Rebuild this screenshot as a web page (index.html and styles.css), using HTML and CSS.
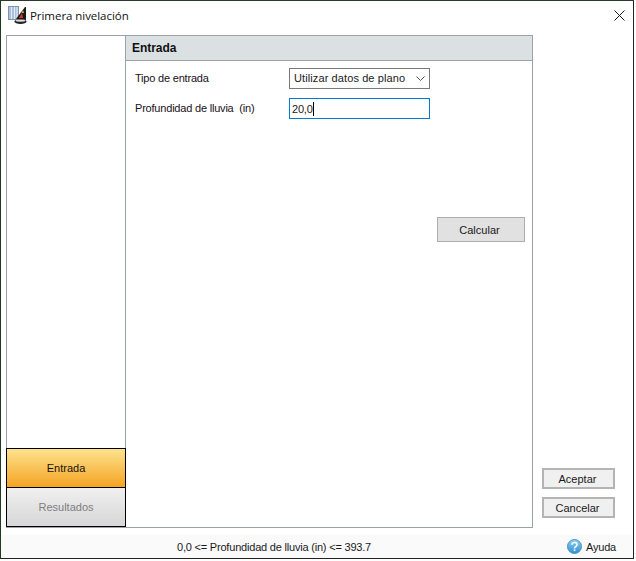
FILE: index.html
```html
<!DOCTYPE html>
<html lang="es">
<head>
<meta charset="utf-8">
<title>Primera nivelación</title>
<link rel="stylesheet" href="styles.css">
</head>
<body>
<div class="window">
  <div class="titlebar">
    <svg class="app-icon" width="22" height="20" viewBox="0 0 22 20">
      <rect x="0.5" y="1.5" width="10" height="13" fill="#a9bfdc" stroke="#7f93ad"/>
      <path d="M3.5 2v12M6.5 2v12M9 2v12" stroke="#e6edf6"/>
      <path d="M8 14L17 2h1v13z" fill="#1a1a1a"/>
      <path d="M11 13l3-5 1 5z" fill="#d8342c"/>
      <path d="M13.5 8l1.5-3 1 3z" fill="#e9b03a"/>
      <ellipse cx="12.5" cy="16.5" rx="6" ry="2.5" fill="#222"/>
      <ellipse cx="12.5" cy="15.6" rx="5" ry="1.2" fill="#ddd"/>
    </svg>
    <span class="title">Primera nivelación</span>
    <svg class="close" width="11" height="11" viewBox="0 0 11 11"><path d="M0.5 0.5l10 10M10.5 0.5l-10 10" stroke="#1a1a1a" fill="none"/></svg>
  </div>
  <div class="main">
    <div class="panel">
      <div class="side">
        <div class="side-space"></div>
        <div class="tab tab-active">Entrada</div>
        <div class="tab tab-off">Resultados</div>
      </div>
      <div class="content">
        <div class="head">Entrada</div>
        <div class="form">
          <div class="row row-first">
            <span class="label">Tipo de entrada</span>
            <div class="select">
              <span class="select-text">Utilizar datos de plano</span>
              <svg width="9" height="5" viewBox="0 0 9 5"><path d="M0.5 0.5l4 4 4-4" stroke="#555" fill="none"/></svg>
            </div>
          </div>
          <div class="row row-second">
            <span class="label">Profundidad de lluvia  (in)</span>
            <div class="input"><span>20,0</span><i class="caret"></i></div>
          </div>
          <div class="calc-row"><div class="btn-calc">Calcular</div></div>
        </div>
      </div>
    </div>
    <div class="actions">
      <div class="btn">Aceptar</div>
      <div class="btn">Cancelar</div>
    </div>
  </div>
  <div class="status">
    <span class="hint">0,0 &lt;= Profundidad de lluvia (in) &lt;= 393.7</span>
    <div class="help">
      <svg width="15" height="15" viewBox="0 0 15 15">
        <defs><linearGradient id="hg" x1="0" y1="0" x2="0" y2="1"><stop offset="0" stop-color="#8fd0f2"/><stop offset="1" stop-color="#2f8fd0"/></linearGradient></defs>
        <circle cx="7.5" cy="7.5" r="7" fill="url(#hg)" stroke="#4a94c4"/>
        <path d="M5 5.8c0-3 5-3 5 0 0 1.8-2.5 1.8-2.5 3.6" fill="none" stroke="#fff" stroke-width="1.6"/>
        <rect x="6.7" y="10.4" width="1.7" height="1.7" fill="#fff"/>
      </svg>
      <span>Ayuda</span>
    </div>
  </div>
</div>
</body>
</html>
```
FILE: styles.css
```css
* { box-sizing: border-box; }
html, body { margin: 0; padding: 0; }
body {
  width: 636px;
  height: 561px;
  overflow: hidden;
  background: #fdfdfd;
  font-family: "Liberation Sans", Arial, sans-serif;
  font-size: 11px;
  letter-spacing: -0.2px;
  color: #1a1a1a;
}
.window {
  width: 634px;
  height: 559px;
  border: 1px solid #1f3a1f;
  border-top-color: #2a3a2a;
  border-right-color: #222;
  border-bottom-color: #222;
  background: #fff;
  display: flex;
  flex-direction: column;
}
.titlebar {
  height: 34px;
  flex: none;
  display: flex;
  align-items: center;
  padding: 0 8px 6px 7px;
}
.app-icon { flex: none; }
.title {
  font-family: "Open Sans", sans-serif;
  font-size: 11.5px;
  letter-spacing: -0.05px;
  color: #111;
  flex: 1;
}
.close { flex: none; }
.main {
  flex: 1;
  display: flex;
  padding-left: 5px;
  min-height: 0;
}
.panel {
  width: 527px;
  height: 493px;
  border: 1px solid #9aa3a8;
  display: flex;
}
.side {
  width: 119px;
  flex: none;
  border-right: 1px solid #9aa3a8;
  display: flex;
  flex-direction: column;
}
.side-space { flex: 1; }
.tab {
  height: 40px;
  flex: none;
  border: 1px solid #000;
  display: flex;
  align-items: center;
  justify-content: center;
  margin-right: -1px;
  margin-left: -1px;
  letter-spacing: 0;
}
.tab-active {
  height: 40px;
  background: linear-gradient(#fde28e, #f4a423);
  color: #1a1010;
}
.tab-off {
  margin-top: -1px;
  background: linear-gradient(#f0f0f0, #d6d6d6);
  color: #808080;
}
.content {
  flex: 1;
  display: flex;
  flex-direction: column;
}
.head {
  height: 25px;
  flex: none;
  background: #dbe0e3;
  border-bottom: 1px solid #9aa3a8;
  padding-left: 6px;
  display: flex;
  align-items: center;
  font-weight: bold;
  font-size: 12px;
  letter-spacing: -0.05px;
  color: #111;
}
.form {
  flex: 1;
  padding: 7px 7px 0 9px;
  display: flex;
  flex-direction: column;
}
.row {
  display: flex;
  align-items: center;
  height: 21px;
}
.row-second { margin-top: 9px; }
.label { width: 154px; flex: none; white-space: pre; color: #1a1020; padding-bottom: 1px; }
.select {
  width: 141px;
  height: 21px;
  border: 1px solid #7a7a7a;
  display: flex;
  align-items: center;
  justify-content: space-between;
  padding: 0 4px 0 4px;
}
.select-text { letter-spacing: 0.1px; padding-bottom: 1px; }
.input {
  width: 141px;
  height: 21px;
  border: 1px solid #0078d7;
  display: flex;
  align-items: center;
  padding-left: 2px;
}
.caret { width: 1px; height: 14px; background: #000; }
.calc-row {
  display: flex;
  justify-content: flex-end;
  margin-top: 98px;
}
.btn-calc {
  width: 88px;
  height: 25px;
  background: #e1e1e1;
  border: 1px solid #adadad;
  display: flex;
  align-items: center;
  justify-content: center;
  letter-spacing: 0;
  padding-right: 3px;
}
.actions {
  width: 100px;
  flex: none;
  display: flex;
  flex-direction: column;
  gap: 8px;
  padding: 433px 0 0 9px;
}
.btn {
  width: 73px;
  height: 21px;
  background: #f0f0f0;
  border: 2px solid #b4b4b4;
  display: flex;
  align-items: center;
  justify-content: center;
  letter-spacing: 0;
  padding-right: 2px;
}
.status {
  height: 23px;
  flex: none;
  background: #fafafa;
  display: flex;
  align-items: center;
}
.hint { margin-left: 176px; flex: 1; }
.help {
  display: flex;
  align-items: center;
  gap: 4px;
  margin-right: 17px;
}
```
